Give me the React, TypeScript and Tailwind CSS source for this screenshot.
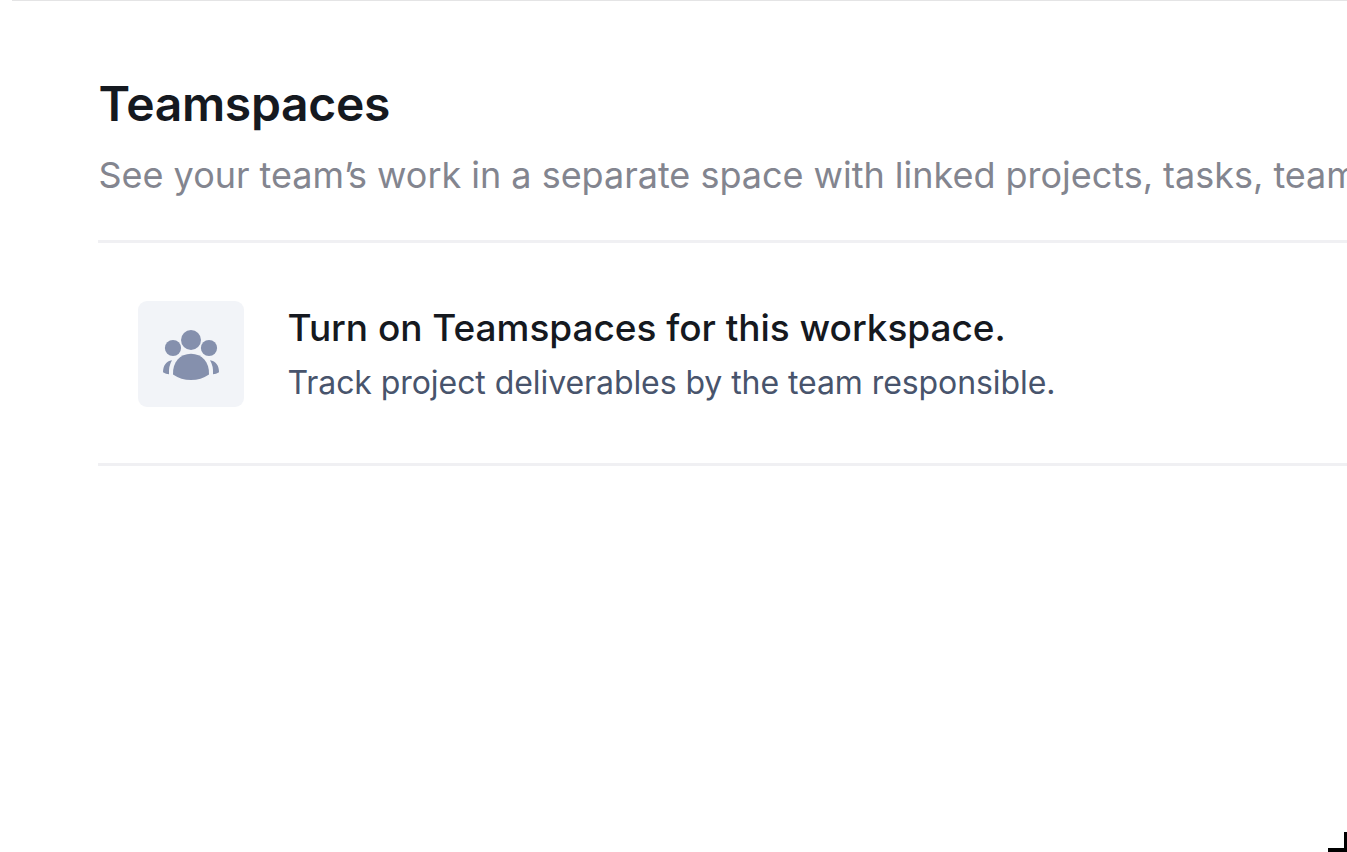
export default function App() {
  return (
    <main className="relative h-[852px] w-full overflow-hidden bg-white font-['Inter',sans-serif]">
      <div className="ml-3 h-px bg-[#e4e4e5]" />
      <section className="ml-[98px] pt-[73px]">
        <h1 className="h-[60px] pl-[0.5px] text-[48px] leading-[60px] font-semibold tracking-[-0.3px] whitespace-nowrap text-[#15191f]"><span>Teamspaces</span></h1>
        <p className="mt-[17px] h-[48px] pl-[0.5px] text-[36px] leading-[48px] tracking-[-0.02px] whitespace-nowrap text-[#83858f]"><span>See your team<span className="tracking-[-5.5px]">’</span>s work in a separate space with linked projects, tasks, team</span></p>
        <div className="mt-[41px] flex h-[226px] border-y-[3px] border-[#f0f0f3] pt-[58px] pl-[40px]">
          <div className="flex size-[106px] shrink-0 items-center justify-center rounded-[9px] bg-[#f2f4f8]">
            <svg className="mt-[2px]" width="58" height="52" viewBox="0 0 58 52" fill="#8590ad">
              <circle cx="29" cy="11" r="10" />
              <circle cx="11" cy="19" r="8.1" />
              <circle cx="47" cy="19" r="8.1" />
              <path d="M11 45.5C10.5 33 18 24.8 29 24.8S47.500 33 47 45.500Q39 51 29 51Q19 51 11 45.500Z" />
              <path d="M10 31.300C4 32 1 37 1 43.200Q4 45 7 45.200Q6.500 37 10 31.300ZM48 31.300C54 32 57 37 57 43.200Q54 45 51 45.200Q51.500 37 48 31.300Z" />
            </svg>
          </div>
          <div className="ml-[43.5px] whitespace-nowrap">
            <h2 className="text-[37px] leading-[54px] font-medium tracking-[-0.03px] text-[#15191f]"><span>Turn on Teamspaces for this workspace.</span></h2>
            <p className="mt-px text-[32px] leading-[54px] tracking-[-0.07px] text-[#48546c]"><span>Track project deliverables by the team responsible.</span></p>
          </div>
        </div>
      </section>
      <div className="absolute right-0 bottom-0 h-[20px] w-[19px] border-r-3 border-b-4 border-black" />
    </main>
  );
}
